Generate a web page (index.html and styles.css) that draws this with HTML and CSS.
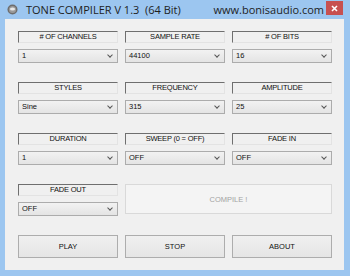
FILE: index.html
```html
<!DOCTYPE html>
<html lang="en">

<head>
  <meta charset="UTF-8">
  <title>Tone Compiler</title>
  <link rel="stylesheet" href="styles.css">
</head>

<body>
  <div class="window">
    <div class="titlebar">
      <svg class="appicon" width="11" height="11" viewBox="0 0 11 11">
        <circle cx="5.5" cy="5.5" r="5" fill="#6d6d6d"/>
        <circle cx="5.5" cy="5.5" r="3.6" fill="#9a9a9a"/>
        <ellipse cx="5.5" cy="5" rx="2.6" ry="1.6" fill="#e8e8e8"/>
      </svg>
      <span class="title">TONE COMPILER V 1.3 &nbsp;(64 Bit)</span>
      <span class="site">www.bonisaudio.com</span>
      <div class="close">
        <svg width="7" height="7" viewBox="0 0 7 7">
          <path d="M1 1L6 6M6 1L1 6" stroke="#fff" stroke-width="1.6"/>
        </svg>
      </div>
    </div>

    <div class="client">
      <div class="grid">
        <div class="cell">
          <div class="caption"># OF CHANNELS</div>
          <div class="combo">1</div>
        </div>
        <div class="cell">
          <div class="caption">SAMPLE RATE</div>
          <div class="combo">44100</div>
        </div>
        <div class="cell">
          <div class="caption"># OF BITS</div>
          <div class="combo">16</div>
        </div>

        <div class="cell">
          <div class="caption">STYLES</div>
          <div class="combo">Sine</div>
        </div>
        <div class="cell">
          <div class="caption">FREQUENCY</div>
          <div class="combo">315</div>
        </div>
        <div class="cell">
          <div class="caption">AMPLITUDE</div>
          <div class="combo">25</div>
        </div>

        <div class="cell">
          <div class="caption">DURATION</div>
          <div class="combo">1</div>
        </div>
        <div class="cell">
          <div class="caption">SWEEP (0 = OFF)</div>
          <div class="combo">OFF</div>
        </div>
        <div class="cell">
          <div class="caption">FADE IN</div>
          <div class="combo">OFF</div>
        </div>

        <div class="cell">
          <div class="caption">FADE OUT</div>
          <div class="combo">OFF</div>
        </div>
        <div class="compile">COMPILE !</div>

        <div class="btn">PLAY</div>
        <div class="btn">STOP</div>
        <div class="btn">ABOUT</div>
      </div>
    </div>
  </div>
</body>

</html>
```

FILE: styles.css
```css
body {
  margin: 0;
  font-family: "Liberation Sans", Arial, sans-serif;
}

.window {
  width: 350px;
  height: 276px;
  box-sizing: border-box;
  background-color: #9cc6f0;
  padding: 0 6px 6px 5px;
  display: flex;
  flex-direction: column;
}

.titlebar {
  height: 19px;
  display: flex;
  align-items: center;
  position: relative;
}

.appicon {
  margin: 0 8px 1px 2px;
}

.title {
  font-family: "Open Sans", sans-serif;
  font-size: 11px;
  color: #1e1e1e;
  flex: 1;
}

.site {
  font-family: "Open Sans", sans-serif;
  font-size: 11px;
  color: #1e1e1e;
  margin-right: 20px;
}

.close {
  position: absolute;
  right: 1px;
  top: 1px;
  width: 17px;
  height: 14px;
  background-color: #c75050;
  display: flex;
  align-items: center;
  justify-content: center;
}

.client {
  flex: 1;
  background-color: #f0f0f0;
  padding: 12px 0 0 13px;
}

.grid {
  display: grid;
  grid-template-columns: 100px 100px 100px;
  column-gap: 7px;
  row-gap: 19px;
}

.cell {
  display: flex;
  flex-direction: column;
}

.caption {
  height: 12px;
  box-sizing: border-box;
  border: 1px solid;
  border-color: #6f6f6f #e3e3e3 #e3e3e3 #6f6f6f;
  font-size: 7.5px;
  letter-spacing: -0.2px;
  line-height: 10px;
  text-align: center;
  color: #111;
  margin-bottom: 6px;
}

.combo {
  height: 14px;
  box-sizing: border-box;
  border: 1px solid #acacac;
  background: linear-gradient(#f2f2f2, #e4e4e4);
  font-size: 7.5px;
  line-height: 12px;
  padding-left: 3px;
  color: #111;
  position: relative;
}

.combo::after {
  content: "";
  position: absolute;
  right: 5px;
  top: 3px;
  width: 3px;
  height: 3px;
  border-right: 1px solid #555;
  border-bottom: 1px solid #555;
  transform: rotate(45deg);
}

.compile {
  grid-column: 2 / 4;
  box-sizing: border-box;
  border: 1px solid #d9d9d9;
  background-color: #f4f4f4;
  color: #a3a3a3;
  font-size: 7.5px;
  display: flex;
  align-items: center;
  justify-content: center;
  margin-bottom: 2px;
}

.btn {
  height: 23px;
  box-sizing: border-box;
  border: 1px solid #adadad;
  background: linear-gradient(#f0f0f0, #e5e5e5);
  font-size: 7.5px;
  color: #111;
  display: flex;
  align-items: center;
  justify-content: center;
}
```
